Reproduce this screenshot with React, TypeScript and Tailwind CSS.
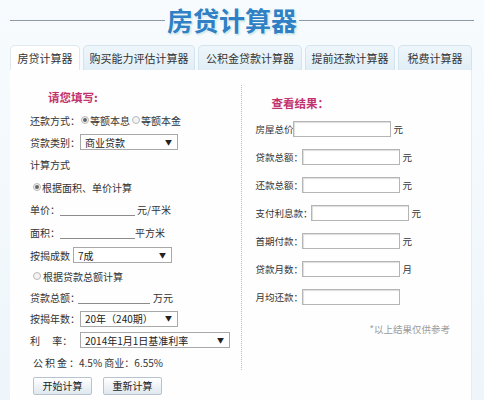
import React from "react";

const font = "font-['Noto_Sans_CJK_SC','Noto_Sans',sans-serif]";

function Radio({ checked }: { checked?: boolean }) {
  return (
    <span className="inline-flex items-center justify-center w-[8px] h-[8px] rounded-full border border-[#b9b9b9] bg-[#f3f3f3] shrink-0">
      {checked && <span className="w-[4px] h-[4px] rounded-full bg-[#666]" />}
    </span>
  );
}

function Select({ w, text }: { w: string; text: string }) {
  return (
    <span className={`${w} h-[16px] border border-[#a8a8a8] bg-white flex items-center justify-between pl-[4px] pr-[5px] shrink-0`}>
      <span className="text-[#222] whitespace-nowrap">{text}</span>
      <span className="text-[7px] text-[#222]">▼</span>
    </span>
  );
}

function Line({ w }: { w: string }) {
  return <span className={`${w} h-[13px] border-b border-[#8c8c8c] shrink-0`} />;
}

function Btn({ children }: { children: React.ReactNode }) {
  return (
    <span className="w-[59px] h-[18px] rounded-[2px] border border-[#b7c4cf] bg-gradient-to-b from-[#ffffff] to-[#dfe8ef] flex items-center justify-center text-[10px] text-[#222]">
      {children}
    </span>
  );
}

function ResRow({ label, unit, lw }: { label: string; unit?: string; lw: string }) {
  return (
    <div className="h-[28px] flex items-center whitespace-nowrap">
      <span className={`${lw} shrink-0 whitespace-nowrap`}>{label}</span>
      <span className="w-[98px] h-[16px] border border-[#b5b5b5] bg-white shadow-[inset_1px_1px_1px_#ddd] shrink-0" />
      {unit && <span className="ml-[3px]">{unit}</span>}
    </div>
  );
}

export default function App() {
  const tabs = [
    { t: "房贷计算器", w: "w-[70px]", active: true },
    { t: "购买能力评估计算器", w: "w-[112px]" },
    { t: "公积金贷款计算器", w: "w-[104px]" },
    { t: "提前还款计算器", w: "w-[90px]" },
    { t: "税费计算器", w: "w-[74px]" },
  ];
  return (
    <div className={`w-[484px] h-[400px] overflow-hidden bg-gradient-to-b from-[#f7fbfe] to-[#eef6fb] ${font} text-[#333]`}>
      <header className="h-[40px] flex items-center px-[10px]">
        <div className="w-[155px] h-px bg-[#8d9aa5]" />
        <h1 className="mx-[2px] text-[26px] leading-none font-bold text-[#2f80c4] [text-shadow:0_0_2px_#fff,0_0_3px_#fff,1px_1px_2px_#9cc]">
          房贷计算器
        </h1>
        <div className="flex-1 h-px bg-[#8d9aa5]" />
      </header>
      <nav className="mt-[5px] h-[25px] flex gap-[3px] px-[10px] items-end">
        {tabs.map((t) => (
          <div
            key={t.t}
            className={`${t.w} h-[25px] rounded-t-[5px] border border-b-0 flex items-center justify-center text-[11px] whitespace-nowrap ${
              t.active
                ? "bg-white border-[#dde8ef] text-[#333]"
                : "bg-gradient-to-b from-[#eef6fb] to-[#e1eef6] border-[#d3e4ee] text-[#333]"
            }`}
          >
            {t.t}
          </div>
        ))}
      </nav>
      <main className="mx-[10px] w-[462px] h-[330px] bg-[#fefefe] border-r border-[#e4edf3] flex text-[10px] whitespace-nowrap">
        <section className="w-[231px] pl-[20px] pt-[17px] flex flex-col">
          <div className="h-[22px] flex items-center pl-[18px] text-[11.5px] font-bold text-[#c2336e]">请您填写:</div>
          <div className="h-[22px] flex items-center">
            <span className="w-[51px] shrink-0">还款方式：</span>
            <Radio checked />
            <span className="ml-[1px]">等额本息</span>
            <span className="ml-[2px] flex"><Radio /></span>
            <span className="ml-[1px]">等额本金</span>
          </div>
          <div className="h-[22px] flex items-center">
            <span className="w-[50px] shrink-0">贷款类别：</span>
            <Select w="w-[98px]" text="商业贷款" />
          </div>
          <div className="h-[23px] flex items-center">计算方式</div>
          <div className="h-[22px] flex items-center pl-[3px]">
            <Radio checked />
            <span className="ml-[1px]">根据面积、单价计算</span>
          </div>
          <div className="h-[23px] flex items-center">
            <span className="w-[30px] shrink-0">单价：</span>
            <Line w="w-[75px]" />
            <span className="ml-[2px]">元/平米</span>
          </div>
          <div className="h-[23px] flex items-center">
            <span className="w-[30px] shrink-0">面积：</span>
            <Line w="w-[75px]" />
            <span>平方米</span>
          </div>
          <div className="h-[22px] flex items-center">
            <span className="w-[43px] shrink-0">按揭成数</span>
            <Select w="w-[99px]" text="7成" />
          </div>
          <div className="h-[20px] flex items-center pl-[3px]">
            <Radio />
            <span className="ml-[2px]">根据贷款总额计算</span>
          </div>
          <div className="h-[22px] flex items-center">
            <span className="w-[48px] shrink-0">贷款总额：</span>
            <Line w="w-[72px]" />
            <span className="ml-[3px]">万元</span>
          </div>
          <div className="h-[21px] flex items-center">
            <span className="w-[50px] shrink-0">按揭年数：</span>
            <Select w="w-[98px]" text="20年（240期）" />
          </div>
          <div className="h-[22px] flex items-center">
            <span className="w-[50px] shrink-0">利　&nbsp;率：</span>
            <Select w="w-[150px]" text="2014年1月1日基准利率" />
          </div>
          <div className="h-[23px] flex items-center pl-[3px]">
            <span className="tracking-[2px]">公积金</span>：4.5% 商业：6.55%
          </div>
          <div className="h-[23px] flex items-center gap-[11px] pl-[3px]">
            <Btn>开始计算</Btn>
            <Btn>重新计算</Btn>
          </div>
        </section>
        <section className="w-[231px] flex">
          <div className="mt-[15px] mb-[30px] border-l border-dotted border-[#bcbcbc]" />
          <div className="flex-1 pl-[14px] pt-[23px] flex flex-col text-[9.5px]">
            <div className="h-[22px] flex items-center pl-[16px] text-[11.5px] font-bold text-[#c2336e]">查看结果：</div>
            <ResRow label="房屋总价" lw="w-[37px]" unit="元" />
            <ResRow label="贷款总额：" lw="w-[46px]" unit="元" />
            <ResRow label="还款总额：" lw="w-[46px]" unit="元" />
            <ResRow label="支付利息款：" lw="w-[55px]" unit="元" />
            <ResRow label="首期付款：" lw="w-[46px]" unit="元" />
            <ResRow label="贷款月数：" lw="w-[46px]" unit="月" />
            <ResRow label="月均还款：" lw="w-[46px]" />
            <div className="mt-[4px] h-[28px] flex items-center justify-end pr-[21px] text-[#9a9a9a]">*以上结果仅供参考</div>
          </div>
        </section>
      </main>
    </div>
  );
}
